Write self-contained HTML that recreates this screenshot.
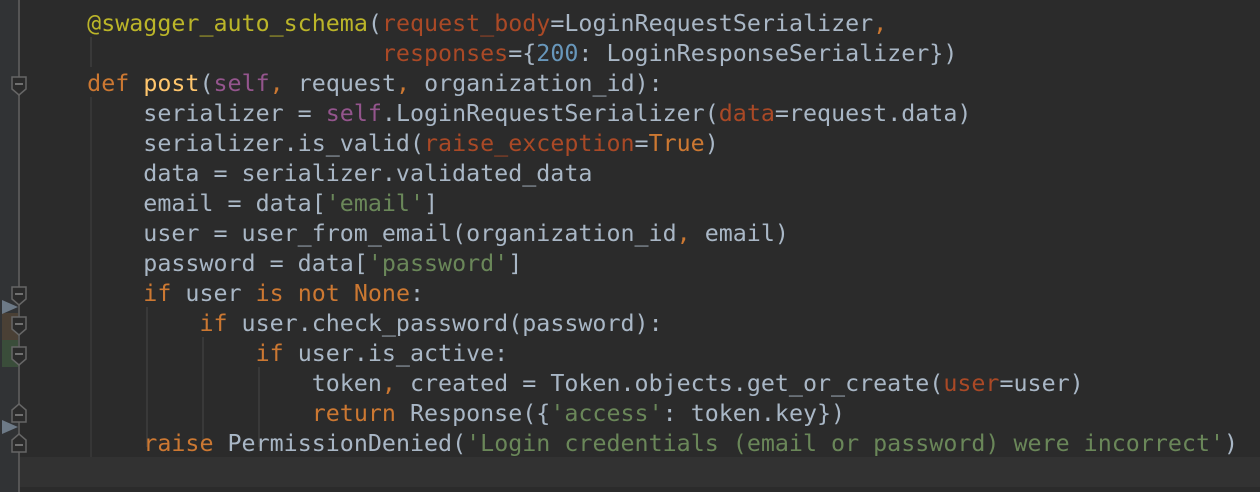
<!DOCTYPE html>
<html><head><meta charset="utf-8"><style>
html,body{margin:0;padding:0;width:1260px;height:492px;overflow:hidden;background:#2b2b2b}
.g{position:absolute;left:0;top:0;width:18px;height:492px;background:#313335}
.gl{position:absolute;left:18px;top:0;width:2px;height:492px;background:#555}
.cur{position:absolute;left:20px;top:457px;width:1240px;height:30px;background:#323232}
pre{position:absolute;left:31px;top:8.5px;margin:0;font-family:"DejaVu Sans Mono","Liberation Mono",monospace;font-size:23.32px;line-height:30px;color:#a9b7c6}
.k{color:#cc7832}.d{color:#bbb529}.f{color:#ffc66d}.s{color:#94558d}.st{color:#6a8759}.n{color:#6897bb}.a{color:#aa4926}
.ig{position:absolute;width:2px;background:#393939}
</style></head><body>
<div class="g"></div>
<div class="cur"></div>
<div style="position:absolute;left:2px;top:313px;width:16px;height:27px;background:#4a4035"></div>
<div style="position:absolute;left:2px;top:340px;width:16px;height:27px;background:#3a4d3a"></div>
<div class="gl"></div>
<div class="ig" style="left:90px;top:37px;height:30px"></div>
<div class="ig" style="left:90px;top:97px;height:360px;background:#363636"></div>
<div class="ig" style="left:146px;top:307px;height:140px"></div>
<div class="ig" style="left:202px;top:337px;height:110px"></div>
<div class="ig" style="left:258px;top:367px;height:80px"></div>
<svg style="position:absolute;left:0;top:0" width="40" height="492">
<g fill="#2b2b2b" stroke="#666" stroke-width="1.5">
<path d="M12 77h14v12l-7 6l-7-6z"/><path d="M12 287h14v12l-7 6l-7-6z"/><path d="M12 317h14v12l-7 6l-7-6z"/><path d="M12 347h14v12l-7 6l-7-6z"/>
<path d="M12 422h14v-12l-7-6l-7 6z"/><path d="M12 452h14v-12l-7-6l-7 6z"/>
</g>
<g stroke="#888" stroke-width="1.5"><path d="M15 84h8M15 294h8M15 324h8M15 354h8M15 415h8M15 445h8"/></g>
<g fill="#6d7a87"><path d="M2 300l16 7l-16 7z"/><path d="M2 420l16 7l-16 7z"/></g>
</svg>
<pre>    <span class="d">@swagger_auto_schema</span>(<span class="a">request_body</span>=LoginRequestSerializer<span class="k">,</span>
                         <span class="a">responses</span>={<span class="n">200</span>: LoginResponseSerializer})
    <span class="k">def </span><span class="f">post</span>(<span class="s">self</span><span class="k">, </span>request<span class="k">, </span>organization_id):
        serializer = <span class="s">self</span>.LoginRequestSerializer(<span class="a">data</span>=request.data)
        serializer.is_valid(<span class="a">raise_exception</span>=<span class="k">True</span>)
        data = serializer.validated_data
        email = data[<span class="st">'email'</span>]
        user = user_from_email(organization_id<span class="k">, </span>email)
        password = data[<span class="st">'password'</span>]
        <span class="k">if </span>user <span class="k">is not None</span>:
            <span class="k">if </span>user.check_password(password):
                <span class="k">if </span>user.is_active:
                    token<span class="k">, </span>created = Token.objects.get_or_create(<span class="a">user</span>=user)
                    <span class="k">return </span>Response({<span class="st">'access'</span>: token.key})
        <span class="k">raise </span>PermissionDenied(<span class="st">'Login credentials (email or password) were incorrect'</span>)
</pre>
</body></html>
